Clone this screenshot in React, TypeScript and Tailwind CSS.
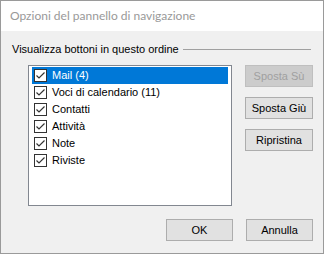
import React from 'react';

const items = [
  { label: 'Mail (4)', selected: true },
  { label: 'Voci di calendario (11)', selected: false },
  { label: 'Contatti', selected: false },
  { label: 'Attività', selected: false },
  { label: 'Note', selected: false },
  { label: 'Riviste', selected: false },
];

const CheckBox = () => (
  <span className="flex h-[13px] w-[13px] shrink-0 items-center justify-center border border-[#333333] bg-white">
    <svg width="11" height="11" viewBox="0 0 11 11">
      <path d="M1.5 5.5 L4 8 L9.5 2.5" fill="none" stroke="#333333" strokeWidth="1.2" />
    </svg>
  </span>
);

const Btn = ({ children, disabled, className = '' }: { children: React.ReactNode; disabled?: boolean; className?: string }) => (
  <button
    type="button"
    disabled={disabled}
    className={`flex h-[22px] items-center justify-center border text-[11px] ${
      disabled ? 'border-[#bfbfbf] bg-[#cccccc] text-[#a0a0a0]' : 'border-[#adadad] bg-[#e1e1e1] text-black'
    } ${className}`}
  >
    {children}
  </button>
);

export default function App() {
  return (
    <div className="h-[255px] w-[325px] bg-white" style={{ fontFamily: '"Liberation Sans", Arial, sans-serif' }}>
      <div className="flex h-[254px] w-[324px] flex-col border border-[#9a9a9a]">
        {/* title bar */}
        <div
          className="flex h-[30px] shrink-0 items-center bg-white pb-px pl-[9px] text-[12px] text-[#999999]"
          style={{ fontFamily: 'Lato, "Noto Sans", sans-serif' }}
        >
          Opzioni del pannello di navigazione
        </div>

        <div className="flex flex-1 flex-col bg-[#f0f0f0] text-[11px] text-black">
          <div className="mt-[11px] flex h-[14px] items-center pl-[11px] pr-[12px]">
            <span>Visualizza bottoni in questo ordine</span>
            <span className="ml-[4px] h-px flex-1 bg-[#a0a0a0]" />
          </div>

          <div className="mt-[9px] flex pl-[27px]">
            <div className="h-[141px] w-[204px] border border-[#828790] bg-white px-[3px] pt-px">
              {items.map((it) => (
                <div
                  key={it.label}
                  className={`flex h-[17px] items-center pl-[2px] ${it.selected ? 'bg-[#0078d7] text-white' : ''}`}
                >
                  <CheckBox />
                  <span className="ml-[5px]">{it.label}</span>
                </div>
              ))}
            </div>

            <div className="ml-[13px] flex w-[68px] flex-col gap-[10px]">
              <Btn disabled>Sposta Sù</Btn>
              <Btn>Sposta Giù</Btn>
              <Btn>Ripristina</Btn>
            </div>
          </div>

          <div className="mt-[13px] flex justify-end gap-[13px] pr-[10px]">
            <Btn className="w-[67px]">OK</Btn>
            <Btn className="w-[67px]">Annulla</Btn>
          </div>
        </div>
      </div>
    </div>
  );
}
